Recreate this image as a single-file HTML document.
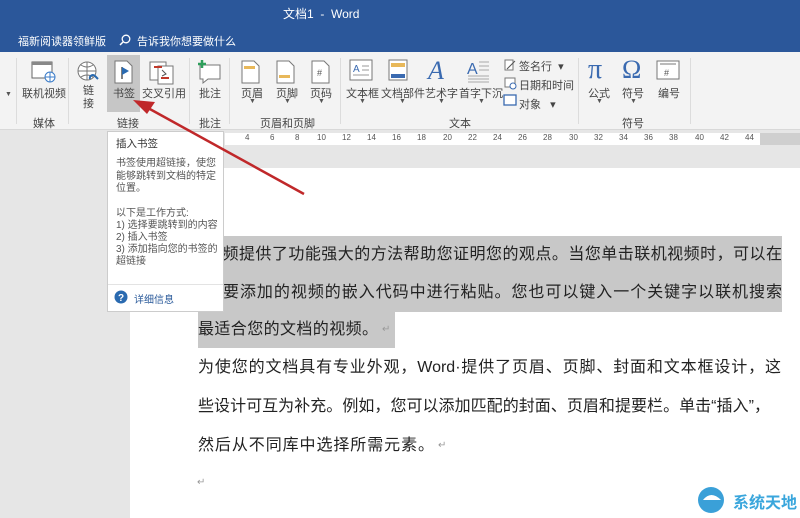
<!DOCTYPE html>
<html><head><meta charset="utf-8"><style>
*{margin:0;padding:0;box-sizing:border-box}
body{width:800px;height:518px;overflow:hidden;position:relative;background:#e6e6e6;font-family:"Liberation Sans","Noto Sans CJK SC",sans-serif;color:#333}
.a{position:absolute}
.t{position:absolute;font-size:11px;color:#444;white-space:nowrap}
.ln{position:absolute;font-size:16px;color:#222;white-space:nowrap;text-align:justify;text-align-last:justify;height:20px;line-height:20px;overflow:hidden}
.sep{position:absolute;top:58px;width:1px;height:66px;background:#dcdcdc}
.dd{position:absolute;font-size:7px;color:#555}
</style></head><body>
<div class="a" style="left:0;top:0;width:800px;height:52px;background:#2b579a"></div>
<div class="t" style="left:283px;top:5px;color:#fff;font-size:12px">文档1 &nbsp;-&nbsp; Word</div>
<div class="t" style="left:18px;top:33px;color:#fff">福新阅读器领鲜版</div>
<svg class="a" style="left:119px;top:34px" width="12" height="12"><circle cx="7" cy="5" r="3.8" fill="none" stroke="#fff" stroke-width="1.3"/><line x1="4" y1="8" x2="1" y2="11" stroke="#fff" stroke-width="1.5"/></svg>
<div class="t" style="left:137px;top:33px;color:#fff">告诉我你想要做什么</div>
<div class="a" style="left:0;top:52px;width:800px;height:78px;background:#f3f3f3;border-bottom:1px solid #d8d8d8"></div>
<div class="a" style="left:107px;top:55px;width:33px;height:57px;background:#c6c6c6"></div>
<div class="sep" style="left:16px"></div><div class="sep" style="left:68px"></div><div class="sep" style="left:189px"></div><div class="sep" style="left:229px"></div><div class="sep" style="left:340px"></div><div class="sep" style="left:578px"></div><div class="sep" style="left:690px"></div>
<div class="dd" style="left:5px;top:91px">▼</div>
<svg class="a" style="left:30px;top:60px" width="28" height="24"><rect x="2" y="2" width="20" height="16" fill="#fff" stroke="#666"/><rect x="2" y="2" width="20" height="3" fill="#888"/><circle cx="20" cy="17" r="5" fill="#fff" stroke="#3a7bc8"/><path d="M15 17h10M20 12v10" stroke="#3a7bc8"/></svg>
<div class="t" style="left:22px;top:85px">联机视频</div>
<svg class="a" style="left:76px;top:60px" width="26" height="26"><circle cx="11" cy="11" r="9" fill="#fff" stroke="#777"/><path d="M2 11h18M11 2v18M5 5q6 4 12 0M5 17q6-4 12 0" stroke="#777" fill="none"/><path d="M14 19a3 3 0 0 1 5-3l3 3" stroke="#2a6ab0" stroke-width="2" fill="none"/></svg>
<div class="t" style="left:83px;top:85px;line-height:13px">链<br>接</div>
<svg class="a" style="left:112px;top:59px" width="24" height="26"><path d="M3 2h12l5 5v17H3z" fill="#fff" stroke="#777"/><path d="M10 8v12" stroke="#555" stroke-width="1.5"/><path d="M10 8l7 4-7 4z" fill="#2a6ab0"/></svg>
<div class="t" style="left:113px;top:85px">书签</div>
<svg class="a" style="left:148px;top:60px" width="28" height="26"><rect x="2" y="2" width="16" height="18" fill="#fff" stroke="#777"/><rect x="10" y="6" width="15" height="18" fill="#fff" stroke="#777"/><path d="M6 7h8" stroke="#c0392b" stroke-width="2"/><path d="M13 18h8" stroke="#c0392b" stroke-width="2"/><path d="M14 10l4 4-4 2" stroke="#555" fill="none"/></svg>
<div class="t" style="left:142px;top:85px">交叉引用</div>
<svg class="a" style="left:196px;top:59px" width="28" height="26"><path d="M4 6h20v14H12l-5 4v-4H4z" fill="#fff" stroke="#777"/><path d="M6 1v8M2 5h8" stroke="#2e9e5b" stroke-width="2.5"/></svg>
<div class="t" style="left:199px;top:85px">批注</div>
<svg class="a" style="left:240px;top:59px" width="22" height="26"><path d="M2 2h12l5 5v17H2z" fill="#fff" stroke="#777"/><rect x="4" y="7" width="11" height="3" fill="#e8b85a"/></svg>
<div class="t" style="left:241px;top:85px">页眉</div><div class="dd" style="left:249px;top:98px">▼</div>
<svg class="a" style="left:275px;top:59px" width="22" height="26"><path d="M2 2h12l5 5v17H2z" fill="#fff" stroke="#777"/><rect x="4" y="16" width="11" height="3" fill="#e8b85a"/></svg>
<div class="t" style="left:276px;top:85px">页脚</div><div class="dd" style="left:284px;top:98px">▼</div>
<svg class="a" style="left:310px;top:59px" width="22" height="26"><path d="M2 2h12l5 5v17H2z" fill="#fff" stroke="#777"/><text x="7" y="17" font-size="9" fill="#555">#</text></svg>
<div class="t" style="left:310px;top:85px">页码</div><div class="dd" style="left:318px;top:98px">▼</div>
<svg class="a" style="left:349px;top:59px" width="26" height="24"><rect x="1" y="1" width="22" height="20" fill="#fff" stroke="#777"/><text x="4" y="13" font-size="10" fill="#3a6ab0">A</text><path d="M13 7h7M13 11h7M4 16h16" stroke="#999"/></svg>
<div class="t" style="left:346px;top:85px">文本框</div><div class="dd" style="left:359px;top:98px">▼</div>
<svg class="a" style="left:387px;top:59px" width="24" height="24"><rect x="2" y="1" width="18" height="20" fill="#fff" stroke="#777"/><rect x="4" y="4" width="14" height="4" fill="#e8b85a"/><rect x="4" y="15" width="14" height="4" fill="#3a6ab0"/></svg>
<div class="t" style="left:381px;top:85px">文档部件</div><div class="dd" style="left:399px;top:98px">▼</div>
<div class="t" style="left:428px;top:56px;font-size:26px;font-style:italic;color:#3a6ab0;font-family:'Liberation Serif',serif">A</div>
<div class="t" style="left:425px;top:85px">艺术字</div><div class="dd" style="left:438px;top:98px">▼</div>
<svg class="a" style="left:466px;top:58px" width="26" height="26"><text x="1" y="16" font-size="16" fill="#3a6ab0" font-family="Liberation Sans">A</text><path d="M13 4h10M13 8h10M13 12h10M2 18h21M2 21h21M2 24h21" stroke="#aaa"/></svg>
<div class="t" style="left:459px;top:85px">首字下沉</div><div class="dd" style="left:478px;top:98px">▼</div>
<svg class="a" style="left:503px;top:58px" width="14" height="50"><path d="M2 2h8v10H2z" fill="#fff" stroke="#777"/><path d="M4 11l8-8" stroke="#555"/><rect x="2" y="20" width="10" height="9" fill="#fff" stroke="#777"/><circle cx="10" cy="28" r="3" fill="#fff" stroke="#3a6ab0"/><rect x="1" y="37" width="12" height="10" fill="#fff" stroke="#3a6ab0" stroke-width="1.3"/></svg>
<div class="t" style="left:519px;top:58px">签名行 &nbsp;▾</div>
<div class="t" style="left:519px;top:77px">日期和时间</div>
<div class="t" style="left:519px;top:96px">对象 &nbsp;&nbsp;▾</div>
<div class="t" style="left:588px;top:54px;font-size:28px;color:#3a6ab0;font-family:'Liberation Serif',serif">π</div>
<div class="t" style="left:588px;top:85px">公式</div><div class="dd" style="left:596px;top:98px">▼</div>
<div class="t" style="left:622px;top:55px;font-size:26px;color:#3a6ab0;font-family:'Liberation Serif',serif">Ω</div>
<div class="t" style="left:622px;top:85px">符号</div><div class="dd" style="left:630px;top:98px">▼</div>
<svg class="a" style="left:656px;top:60px" width="26" height="22"><rect x="1" y="1" width="22" height="18" fill="#fff" stroke="#777"/><path d="M4 4h16" stroke="#777"/><text x="8" y="16" font-size="9" fill="#555">#</text></svg>
<div class="t" style="left:658px;top:85px">编号</div>
<div class="t" style="left:33px;top:115px">媒体</div>
<div class="t" style="left:117px;top:115px">链接</div>
<div class="t" style="left:199px;top:115px">批注</div>
<div class="t" style="left:260px;top:115px">页眉和页脚</div>
<div class="t" style="left:449px;top:115px">文本</div>
<div class="t" style="left:622px;top:115px">符号</div>
<div class="a" style="left:225px;top:133px;width:535px;height:12px;background:#fff"></div>
<div class="a" style="left:760px;top:133px;width:40px;height:12px;background:#cfcfcf"></div>
<div class="t" style="left:240px;top:133px;font-size:8px;color:#555">
<span style="position:absolute;left:5px">4</span><span style="position:absolute;left:30px">6</span><span style="position:absolute;left:55px">8</span><span style="position:absolute;left:77px">10</span><span style="position:absolute;left:102px">12</span><span style="position:absolute;left:127px">14</span><span style="position:absolute;left:152px">16</span><span style="position:absolute;left:177px">18</span><span style="position:absolute;left:203px">20</span><span style="position:absolute;left:228px">22</span><span style="position:absolute;left:253px">24</span><span style="position:absolute;left:278px">26</span><span style="position:absolute;left:303px">28</span><span style="position:absolute;left:329px">30</span><span style="position:absolute;left:354px">32</span><span style="position:absolute;left:379px">34</span><span style="position:absolute;left:404px">36</span><span style="position:absolute;left:429px">38</span><span style="position:absolute;left:455px">40</span><span style="position:absolute;left:480px">42</span><span style="position:absolute;left:505px">44</span></div>
<div class="a" style="left:130px;top:168px;width:670px;height:350px;background:#fff"></div>
<div class="a" style="left:198px;top:236px;width:584px;height:76px;background:#c8c8c8"></div>
<div class="a" style="left:198px;top:312px;width:197px;height:36px;background:#c8c8c8"></div>
<div class="ln" style="left:206px;top:245px;width:576px">视频提供了功能强大的方法帮助您证明您的观点。当您单击联机视频时，可以在</div>
<div class="ln" style="left:206px;top:283px;width:576px">需要添加的视频的嵌入代码中进行粘贴。您也可以键入一个关键字以联机搜索</div>
<div class="ln" style="left:198px;top:320px;width:180px">最适合您的文档的视频。</div><div class="t" style="left:382px;top:324px;color:#999;font-size:10px">↵</div>
<div class="ln" style="left:198px;top:358px;width:583px">为使您的文档具有专业外观，Word·提供了页眉、页脚、封面和文本框设计，这</div>
<div class="ln" style="left:198px;top:397px;width:572px">些设计可互为补充。例如，您可以添加匹配的封面、页眉和提要栏。单击“插入”，</div>
<div class="ln" style="left:198px;top:436px;width:236px">然后从不同库中选择所需元素。</div><div class="t" style="left:438px;top:440px;color:#999;font-size:10px">↵</div>
<div class="t" style="left:197px;top:477px;color:#999;font-size:10px">↵</div>
<div class="a" style="left:107px;top:131px;width:117px;height:181px;background:#fff;border:1px solid #ccc"></div>
<div class="t" style="left:116px;top:136px;font-size:10.5px;color:#333">插入书签</div>
<div class="t" style="left:116px;top:158px;font-size:10px;color:#555;line-height:12.5px;white-space:normal;width:104px">书签使用超链接，使您能够跳转到文档的特定位置。</div>
<div class="t" style="left:116px;top:208px;font-size:10px;color:#555;line-height:12px;white-space:normal;width:104px">以下是工作方式:<br>1) 选择要跳转到的内容<br>2) 插入书签<br>3) 添加指向您的书签的超链接</div>
<div class="a" style="left:108px;top:284px;width:115px;height:1px;background:#e3e3e3"></div>
<svg class="a" style="left:114px;top:290px" width="14" height="14"><circle cx="7" cy="7" r="6.5" fill="#2a6ab0"/><text x="4" y="11" font-size="10" fill="#fff" font-weight="bold">?</text></svg>
<div class="t" style="left:134px;top:291px;font-size:10px;color:#2a5a9a">详细信息</div>
<svg class="a" style="left:0;top:0" width="800" height="518"><line x1="304" y1="194" x2="148" y2="108" stroke="#c0282a" stroke-width="2.5"/><path d="M133 100l22 2-8 12z" fill="#c0282a"/></svg>
<svg class="a" style="left:695px;top:485px" width="32" height="30"><circle cx="16" cy="15" r="13" fill="#3aa0d8"/><path d="M8 15q8-10 18 0" fill="#fff"/></svg>
<div class="t" style="left:733px;top:489px;font-size:16px;color:#3aa6dc;font-weight:bold">系统天地</div>
</body></html>
